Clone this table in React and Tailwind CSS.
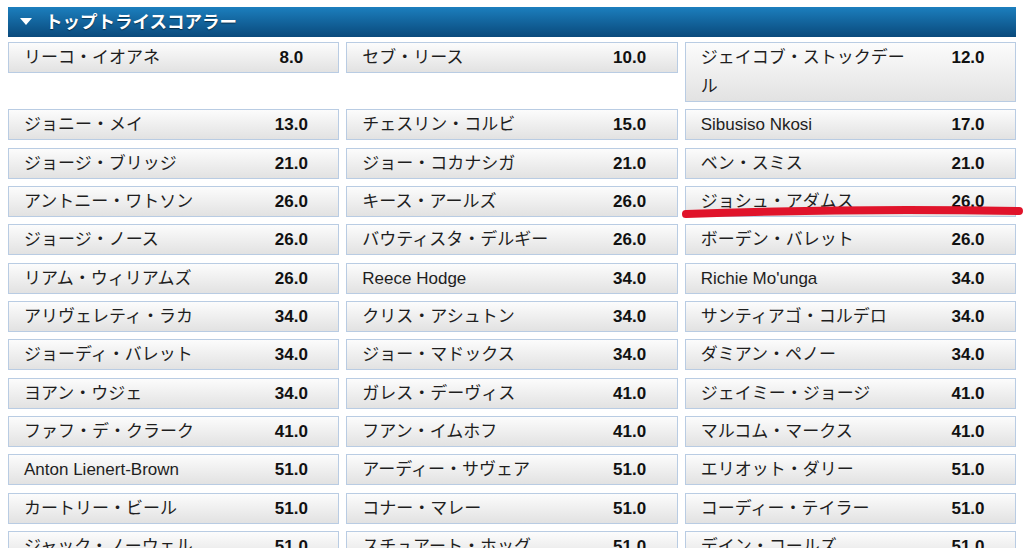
import React from "react";

const rows = [
  [["リーコ・イオアネ", "8.0"], ["セブ・リース", "10.0"], ["ジェイコブ・ストックデール", "12.0"]],
  [["ジョニー・メイ", "13.0"], ["チェスリン・コルビ", "15.0"], ["Sibusiso Nkosi", "17.0"]],
  [["ジョージ・ブリッジ", "21.0"], ["ジョー・コカナシガ", "21.0"], ["ベン・スミス", "21.0"]],
  [["アントニー・ワトソン", "26.0"], ["キース・アールズ", "26.0"], ["ジョシュ・アダムス", "26.0"]],
  [["ジョージ・ノース", "26.0"], ["バウティスタ・デルギー", "26.0"], ["ボーデン・バレット", "26.0"]],
  [["リアム・ウィリアムズ", "26.0"], ["Reece Hodge", "34.0"], ["Richie Mo'unga", "34.0"]],
  [["アリヴェレティ・ラカ", "34.0"], ["クリス・アシュトン", "34.0"], ["サンティアゴ・コルデロ", "34.0"]],
  [["ジョーディ・バレット", "34.0"], ["ジョー・マドックス", "34.0"], ["ダミアン・ペノー", "34.0"]],
  [["ヨアン・ウジェ", "34.0"], ["ガレス・デーヴィス", "41.0"], ["ジェイミー・ジョージ", "41.0"]],
  [["ファフ・デ・クラーク", "41.0"], ["フアン・イムホフ", "41.0"], ["マルコム・マークス", "41.0"]],
  [["Anton Lienert-Brown", "51.0"], ["アーディー・サヴェア", "51.0"], ["エリオット・ダリー", "51.0"]],
  [["カートリー・ビール", "51.0"], ["コナー・マレー", "51.0"], ["コーディー・テイラー", "51.0"]],
  [["ジャック・ノーウェル", "51.0"], ["スチュアート・ホッグ", "51.0"], ["デイン・コールズ", "51.0"]],
];

function Cell({ name, odds }) {
  return (
    <div className="flex items-start border border-[#b9cce3] bg-gradient-to-b from-[#fcfcfc] to-[#e2e2e2] leading-[29px]">
      <div className="flex-1 min-w-0 pl-[15px] pr-[12px] text-[17px] text-[#1e1e1e]">{name}</div>
      <div className="w-[80px] mr-[7px] text-center text-[17px] font-bold text-[#111]">{odds}</div>
    </div>
  );
}

export default function App() {
  return (
    <div
      className="relative h-[548px] w-[1024px] overflow-hidden bg-white"
      style={{ fontFamily: '"Liberation Sans", Arial, "Noto Sans CJK JP", sans-serif' }}
    >
      <div className="px-2 pt-[7px]">
        <div className="flex h-[30px] items-center bg-gradient-to-b from-[#1c7fbe] to-[#0a4a7c] pl-[12px]">
          <svg width="12" height="8" viewBox="0 0 12 8" className="mr-[13px]">
            <polygon points="0,0 12,0 6,7" fill="#ffffff" />
          </svg>
          <span className="text-[17.5px] font-bold text-white [text-shadow:0_1px_1px_rgba(0,0,0,0.5)]">
            トップトライスコアラー
          </span>
        </div>
        <div className="mt-[5px] grid grid-cols-3 items-start gap-x-[7px] gap-y-[7.33px]">
          {rows.flatMap((r, i) =>
            r.map(([n, o], j) => <Cell key={i + "-" + j} name={n} odds={o} />)
          )}
        </div>
      </div>
      <svg
        className="pointer-events-none absolute left-0 top-0"
        width="1024"
        height="548"
        viewBox="0 0 1024 548"
      >
        <path
          d="M686 214 Q 850 208 1019 211"
          stroke="#e0132a"
          strokeWidth="8"
          strokeLinecap="round"
          fill="none"
        />
      </svg>
    </div>
  );
}
